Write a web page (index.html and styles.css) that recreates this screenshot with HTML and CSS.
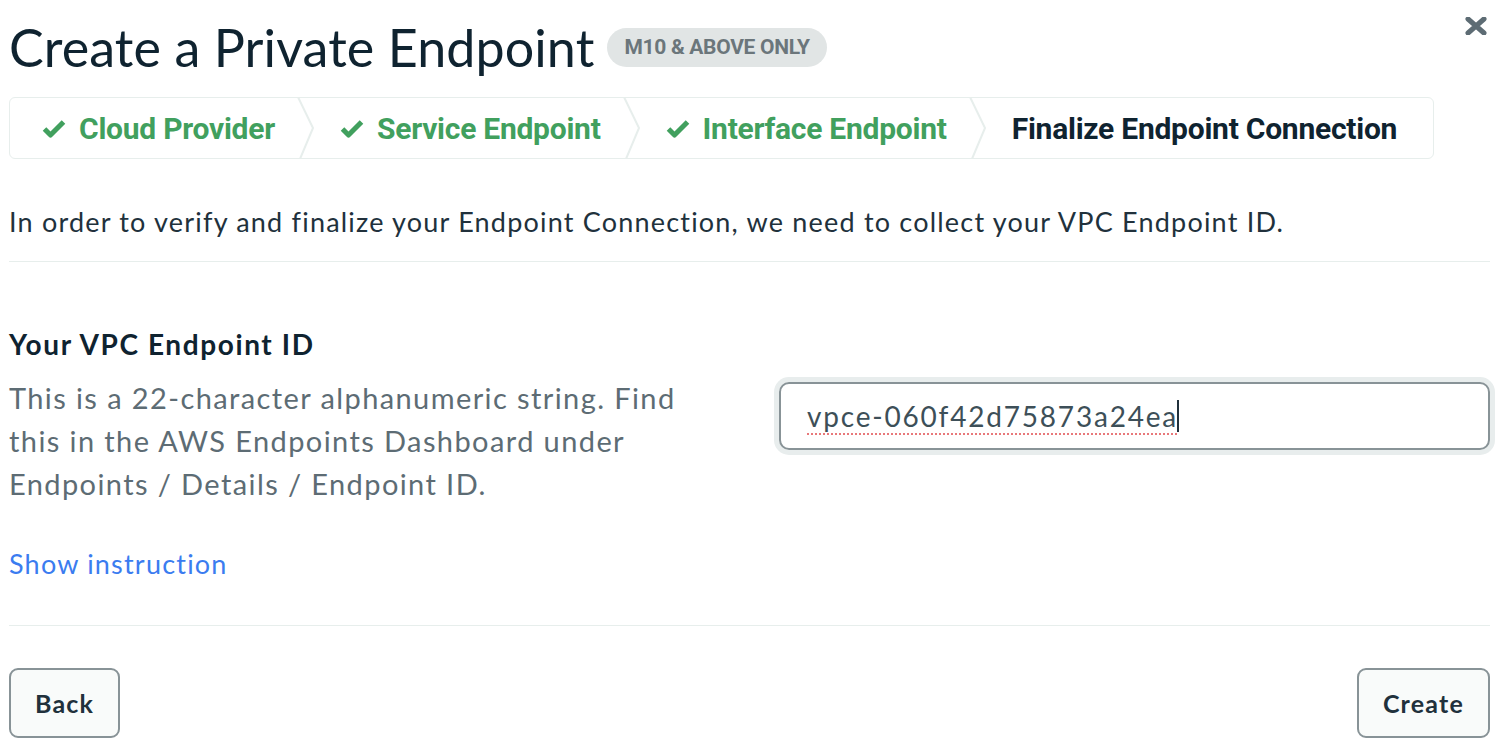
FILE: index.html
```html
<!DOCTYPE html>
<html>
<head>
<meta charset="utf-8">
<link rel="stylesheet" href="styles.css">
</head>
<body>
<div class="modal">
  <div class="header">
    <h1 class="title">Create a Private Endpoint</h1>
    <span class="badge">M10 &amp; ABOVE ONLY</span>
    <svg class="close" width="22" height="18" viewBox="0 0 22 18"><path d="M3 2 L19 16 M19 2 L3 16" stroke="#5d6c74" stroke-width="5" stroke-linecap="round" fill="none"/></svg>
  </div>
  <div class="stepper">
    <div class="step done first">
      <svg class="check" width="24" height="19" viewBox="0 0 24 19"><path d="M2.5 10 L8.5 16 L21.5 3" stroke="#41a05e" stroke-width="5" fill="none" stroke-linejoin="round"/></svg>
      <span>Cloud Provider</span>
    </div>
    <svg class="chev" width="18" height="62" viewBox="0 0 18 62"><path d="M1 0 L16 31 L3 62" stroke="#e7eeec" stroke-width="2" fill="none"/></svg>
    <div class="step done">
      <svg class="check" width="24" height="19" viewBox="0 0 24 19"><path d="M2.5 10 L8.5 16 L21.5 3" stroke="#41a05e" stroke-width="5" fill="none" stroke-linejoin="round"/></svg>
      <span>Service Endpoint</span>
    </div>
    <svg class="chev" width="18" height="62" viewBox="0 0 18 62"><path d="M1 0 L16 31 L3 62" stroke="#e7eeec" stroke-width="2" fill="none"/></svg>
    <div class="step done">
      <svg class="check" width="24" height="19" viewBox="0 0 24 19"><path d="M2.5 10 L8.5 16 L21.5 3" stroke="#41a05e" stroke-width="5" fill="none" stroke-linejoin="round"/></svg>
      <span>Interface Endpoint</span>
    </div>
    <svg class="chev" width="18" height="62" viewBox="0 0 18 62"><path d="M1 0 L16 31 L3 62" stroke="#e7eeec" stroke-width="2" fill="none"/></svg>
    <div class="step current last">
      <span>Finalize Endpoint Connection</span>
    </div>
  </div>
  <p class="intro">In order to verify and finalize your Endpoint Connection, we need to collect your VPC Endpoint ID.</p>
  <hr class="divider">
  <div class="field">
    <div class="field-text">
      <div class="label">Your VPC Endpoint ID</div>
      <p class="desc">This is a 22-character alphanumeric string. Find this in the AWS Endpoints Dashboard under Endpoints / Details / Endpoint ID.</p>
    </div>
    <div class="input-wrap">
      <div class="input"><span class="value">vpce-060f42d75873a24ea</span><span class="caret"></span></div>
    </div>
  </div>
  <a class="link" href="#">Show instruction</a>
  <hr class="divider bottom">
  <div class="footer">
    <button class="btn">Back</button>
    <button class="btn">Create</button>
  </div>
</div>
</body>
</html>
```
FILE: styles.css
```css
* { box-sizing: border-box; }
html, body { margin: 0; padding: 0; background: #fff; }
body { font-family: Lato, "Open Sans", sans-serif; color: #21313c; }
.modal { padding: 0 8px 0 9px; }
.header { display: flex; align-items: center; height: 97px; padding-bottom: 3px; }
.title { margin: 0; font-weight: 400; font-size: 52px; line-height: 60px; color: #0f2330; letter-spacing: 0.1px; }
.badge { margin-left: 13px; height: 39px; border-radius: 20px; background: #e1e5e5; color: #6b767b; font-family: Roboto, sans-serif; font-weight: 700; font-size: 21px; line-height: 39px; padding: 0 17px; letter-spacing: -0.3px; }
.close { margin-left: auto; align-self: flex-start; margin-top: 17px; margin-right: 3px; }
.stepper { display: flex; align-items: stretch; width: 1425px; height: 62px; border: 1.5px solid #e7eeec; border-radius: 6px; }
.step { flex: none; display: flex; align-items: center; gap: 13px; white-space: nowrap; font-family: Roboto, sans-serif; font-weight: 700; font-size: 30px; letter-spacing: -0.25px; padding: 0 22px 0 25px; }
.step.first { padding-left: 32px; }
.step.last { padding-left: 25px; padding-right: 0; }
.step.done { color: #41a05e; }
.step.current { color: #0f2330; }
.chev { flex: none; margin-top: -1px; }
.intro { margin: 41px 0 0; font-size: 27px; line-height: 43px; letter-spacing: 1.2px; color: #21313c; }
.divider { border: 0; border-top: 1.5px solid #e7eeec; margin: 18px 0 0; }
.field { display: grid; grid-template-columns: 770px 1fr; align-items: center; margin-top: 61px; }
.label { font-weight: 700; font-size: 28px; line-height: 42px; letter-spacing: 1.6px; color: #0f2330; }
.desc { margin: 11px 0 0; font-size: 29px; line-height: 43px; letter-spacing: 1.4px; color: #5d6c74; max-width: 700px; }
.input-wrap { padding-top: 4px; }
.input { width: 711px; height: 68px; border: 2px solid #889397; border-radius: 10px; box-shadow: 0 0 0 5px #e8eded; display: flex; align-items: center; padding-left: 26px; font-size: 28px; letter-spacing: 1.8px; color: #3d4f58; }
.value { text-decoration: underline dotted #e8787a; text-decoration-thickness: 2px; text-underline-offset: 6px; }
.caret { width: 2px; height: 32px; background: #21313c; margin-left: -1px; }
.link { display: block; margin-top: 37px; font-size: 27px; line-height: 43px; letter-spacing: 1.2px; color: #3b7cf0; text-decoration: none; width: max-content; }
.divider.bottom { margin-top: 40px; }
.footer { display: flex; justify-content: space-between; margin-top: 42px; }
.btn { height: 70px; padding: 0 24px; border: 2px solid #889397; border-radius: 9px; background: #f9fbfa; font-family: Lato, sans-serif; font-weight: 700; font-size: 25px; letter-spacing: 1.2px; color: #21313c; }
```
